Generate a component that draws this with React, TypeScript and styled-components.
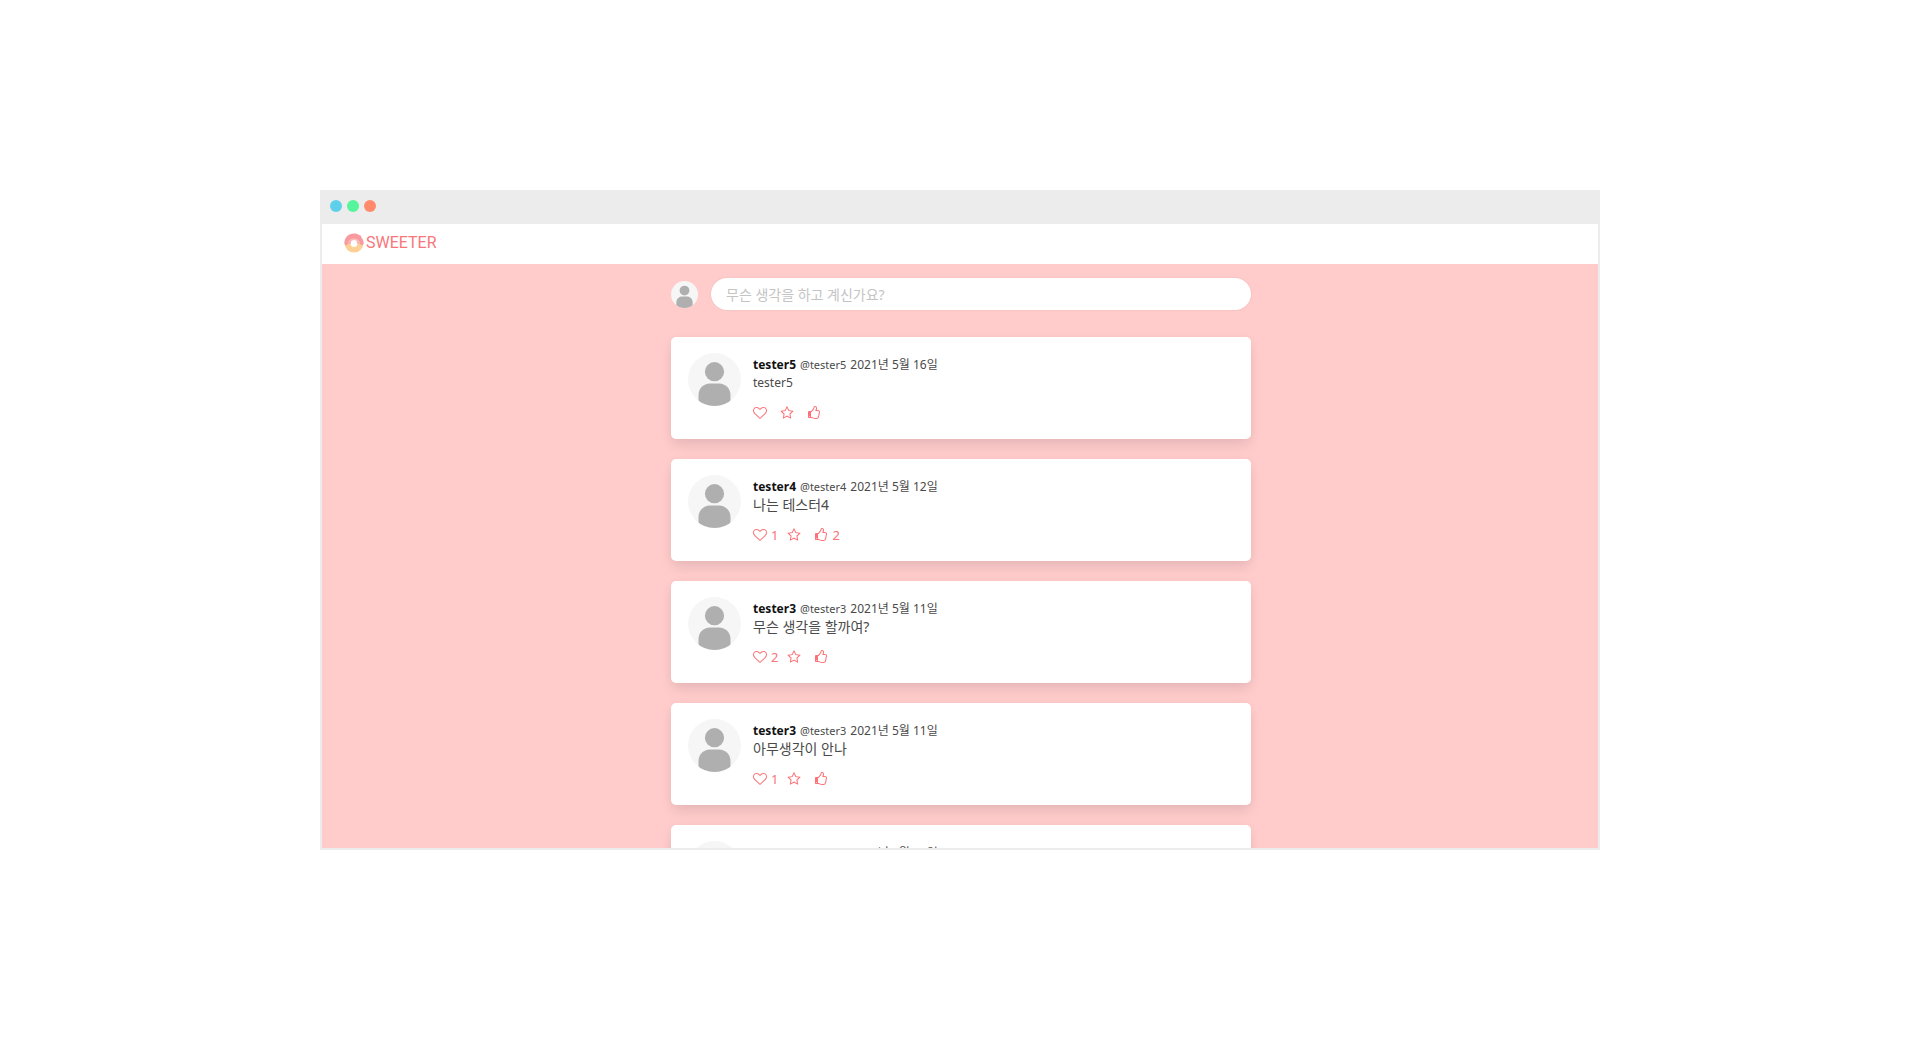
import React from "react";
import styled, { createGlobalStyle } from "styled-components";

const GlobalStyle = createGlobalStyle`
  * { box-sizing: border-box; }
  body {
    margin: 0;
    background: #ffffff;
    color: #4a4a4a;
    font-family: "Noto Sans", "Noto Sans CJK KR", sans-serif;
  }
`;

const Stage = styled.main`
  display: flex;
  align-items: center;
  justify-content: center;
  min-height: 100vh;
`;

const BrowserWindow = styled.section`
  display: flex;
  flex-direction: column;
  width: 100%;
  max-width: 1280px;
  height: 660px;
  overflow: hidden;
  border: 2px solid #ececec;
  border-top: 0;
`;

const TitleBar = styled.div`
  display: flex;
  flex: none;
  align-items: center;
  gap: 5px;
  height: 34px;
  padding: 0 8px 2px;
  background: #ececec;
`;

const Dot = styled.span<{ $color: string }>`
  width: 12px;
  height: 12px;
  border-radius: 50%;
  background: ${(p) => p.$color};
`;

const Header = styled.header`
  display: flex;
  flex: none;
  align-items: center;
  height: 40px;
  padding: 0 22px 2px;
  background: #ffffff;
`;

const Brand = styled.a`
  display: flex;
  align-items: center;
  gap: 2px;
  color: #f9767b;
  font-family: Roboto, "Liberation Sans", sans-serif;
  font-size: 16px;
  line-height: 20px;
  text-decoration: none;
`;

const Feed = styled.div`
  display: flex;
  flex: 1;
  flex-direction: column;
  align-items: center;
  min-height: 0;
  padding: 14px 16px 0 18px;
  overflow: hidden;
  background: #ffcbcb;
`;

const Composer = styled.form`
  display: flex;
  flex: none;
  align-items: center;
  gap: 13px;
  width: 100%;
  max-width: 580px;
  margin-bottom: 27px;
`;

const ThoughtInput = styled.input`
  flex: 1;
  min-width: 0;
  height: 32px;
  padding: 0 15px;
  border: 0;
  border-radius: 16px;
  outline: 0;
  background: #ffffff;
  box-shadow: 0 0 2px rgba(0, 0, 0, 0.1);
  color: #4a4a4a;
  font: inherit;
  font-size: 14px;

  &::placeholder {
    color: #c4c4c4;
    opacity: 1;
  }
`;

const Posts = styled.ul`
  display: flex;
  flex: none;
  flex-direction: column;
  gap: 20px;
  width: 100%;
  max-width: 580px;
  margin: 0;
  padding: 0;
  list-style: none;
`;

const Card = styled.li`
  display: flex;
  gap: 12px;
  padding: 16px 17px;
  border-radius: 5px;
  background: #ffffff;
  box-shadow: 0 7px 14px -2px rgba(10, 10, 10, 0.1), 0 0 8px rgba(10, 10, 10, 0.03);
`;

const AvatarDrawing = styled.svg<{ $size: number }>`
  flex: none;
  width: ${(p) => p.$size}px;
  height: ${(p) => p.$size}px;
  border-radius: 50%;
`;

const Body = styled.div`
  display: flex;
  flex: 1;
  flex-direction: column;
  min-width: 0;
  padding-top: 3px;
`;

const Meta = styled.p`
  display: flex;
  align-items: baseline;
  gap: 4px;
  margin: 0;
  font-size: 12px;
  line-height: 18px;
  white-space: nowrap;
`;

const Name = styled.strong`
  color: #111111;
  font-weight: 700;
`;

const Handle = styled.span`
  font-size: 11px;
`;

const Message = styled.p`
  min-height: 18px;
  margin: 0 0 11px;
  font-size: 14px;
  line-height: 18px;

  &:lang(en) {
    font-size: 12px;
  }
`;

const Actions = styled.div`
  display: flex;
  gap: 9px;
`;

const Action = styled.button`
  display: flex;
  align-items: center;
  gap: 4px;
  height: 20px;
  padding: 0;
  border: 0;
  background: none;
  color: #fb7277;
  font: inherit;
  font-size: 13px;
  line-height: 20px;
  cursor: pointer;
`;

const Glyph = styled.svg`
  width: 14px;
  height: 14px;
  fill: currentColor;
`;

type Post = {
  name: string;
  date: string;
  text: string;
  lang?: string;
  hearts?: number;
  likes?: number;
};

const posts: Post[] = [
  { name: "tester5", date: "2021년 5월 16일", text: "tester5", lang: "en" },
  { name: "tester4", date: "2021년 5월 12일", text: "나는 테스터4", hearts: 1, likes: 2 },
  { name: "tester3", date: "2021년 5월 11일", text: "무슨 생각을 할까여?", hearts: 2 },
  { name: "tester3", date: "2021년 5월 11일", text: "아무생각이 안나", hearts: 1 },
  { name: "tester3", date: "2021년 5월 11일", text: "" },
];

const HeartIcon = () => (
  <Glyph viewBox="0 0 1792 1792" aria-hidden="true">
    <path d="M1664 596q0-81-21.500-143t-55-98.500-81.500-59.500-94-31-98-8-112 25.500-110.500 64-86.500 72-60 61.500q-18 22-49 22t-49-22q-24-28-60-61.500t-86.500-72-110.500-64-112-25.500-98 8-94 31-81.500 59.500-55 98.500-21.500 143q0 168 187 355l581 560 580-559q188-188 188-356zm128 0q0 221-229 450l-623 600q-18 18-44 18t-44-18l-624-602q-10-8-27.500-26t-55.500-65.500-68-97.500-53.500-121-23.500-138q0-220 127-344t351-124q62 0 126.500 21.500t120 58 95.500 68.500 76 68q36-36 76-68t95.500-68.500 120-58 126.500-21.500q224 0 351 124t127 344z" />
  </Glyph>
);

const StarIcon = () => (
  <Glyph viewBox="0 0 1792 1792" aria-hidden="true">
    <path d="M1201 1004l306-297-422-62-189-382-189 382-422 62 306 297-73 421 378-199 377 199zm527-357q0 22-26 48l-363 354 86 500q1 7 1 20 0 50-41 50-19 0-40-12l-449-236-449 236q-22 12-40 12-21 0-31.500-14.500t-10.500-35.500q0-6 2-20l86-500-364-354q-25-27-25-48 0-37 56-46l502-73 225-455q19-41 49-41t49 41l225 455 502 73q56 9 56 46z" />
  </Glyph>
);

const ThumbIcon = () => (
  <Glyph viewBox="0 0 1792 1792" aria-hidden="true">
    <path d="M384 1344q0-26-19-45t-45-19-45 19-19 45 19 45 45 19 45-19 19-45zm1152-576q0-51-39-89.500t-89-38.500h-352q0-58 48-159.500t48-160.500q0-98-32-145t-128-47q-26 26-38 85t-30.500 125.500-59.500 109.500q-22 23-77 91-4 5-23 30t-31.500 41-34.500 42.500-40 44-38.500 35.500-40 27-35.500 9h-32v640h32q13 0 31.500 3t33 6.500 38 11 35 11.500 35.500 12.500 29 10.500q211 73 342 73h121q192 0 192-167 0-26-5-56 30-16 47.500-52.500t17.500-73.500-18-69q53-50 53-119 0-25-10-55.500t-25-47.500q32-1 53.500-47t21.500-81zm128-1q0 89-49 163 9 33 9 69 0 77-38 144 3 21 3 43 0 101-60 178 1 139-85 219.500t-227 80.500h-129q-96 0-189.500-22.500t-216.500-65.500q-116-40-138-40h-288q-53 0-90.500-37.500t-37.500-90.500v-640q0-53 37.500-90.500t90.500-37.500h274q36-24 137-155 58-75 107-128 24-25 35.500-85.500t30.500-126.500 62-108q39-37 90-37 84 0 151 32.500t102 101.500 35 186q0 93-48 192h176q104 0 180 76t76 179z" />
  </Glyph>
);

const Avatar = ({ size }: { size: number }) => (
  <AvatarDrawing $size={size} viewBox="0 0 53 53" aria-hidden="true">
    <rect width="53" height="53" fill="#f6f6f6" />
    <circle cx="26.500" cy="18.700" r="9.600" fill="#afafaf" />
    <path d="M10.500 53V42c0-6.500 5-11.500 11.500-11.500h9c6.500 0 11.500 5 11.500 11.500v11z" fill="#afafaf" />
  </AvatarDrawing>
);

const Donut = () => (
  <svg width="20" height="20" viewBox="0 0 20 20" aria-hidden="true">
    <circle cx="10" cy="10.300" r="9.300" fill="#fdd095" />
    <path
      d="M.4 10.500C.2 4.700 4.500.6 10 .6c2 0 3.600.5 5 1.400 1.600 0 2.300 1 2.200 2.200C19 6 19.700 8 19.600 10.500c-.4 2.200-2.900 2.200-3.400.2h-12.400c-.5 2-3 2-3.400-.2z"
      fill="#f99aa0"
    />
    <path d="M4.500 10.700a5.600 5.600 0 0 1 11 0" fill="none" stroke="#fcbcb6" strokeWidth="1.500" />
    <circle cx="10" cy="10.500" r="3.400" fill="#ffffff" />
  </svg>
);

export default function App() {
  return (
    <>
      <GlobalStyle />
      <Stage>
        <BrowserWindow>
          <TitleBar>
            <Dot $color="#5fd0ea" />
            <Dot $color="#57f59b" />
            <Dot $color="#ff8a6c" />
          </TitleBar>
          <Header>
            <Brand href="#">
              <Donut />
              SWEETER
            </Brand>
          </Header>
          <Feed>
            <Composer>
              <Avatar size={27} />
              <ThoughtInput aria-label="새 글" placeholder="무슨 생각을 하고 계신가요?" />
            </Composer>
            <Posts>
              {posts.map((post, index) => (
                <Card key={index}>
                  <Avatar size={53} />
                  <Body>
                    <Meta>
                      <Name>{post.name}</Name>
                      <Handle>@{post.name}</Handle>
                      <time>{post.date}</time>
                    </Meta>
                    <Message lang={post.lang ?? "ko"}>{post.text}</Message>
                    <Actions>
                      <Action type="button" aria-label="하트">
                        <HeartIcon />
                        <span>{post.hearts}</span>
                      </Action>
                      <Action type="button" aria-label="즐겨찾기">
                        <StarIcon />
                        <span />
                      </Action>
                      <Action type="button" aria-label="좋아요">
                        <ThumbIcon />
                        <span>{post.likes}</span>
                      </Action>
                    </Actions>
                  </Body>
                </Card>
              ))}
            </Posts>
          </Feed>
        </BrowserWindow>
      </Stage>
    </>
  );
}
